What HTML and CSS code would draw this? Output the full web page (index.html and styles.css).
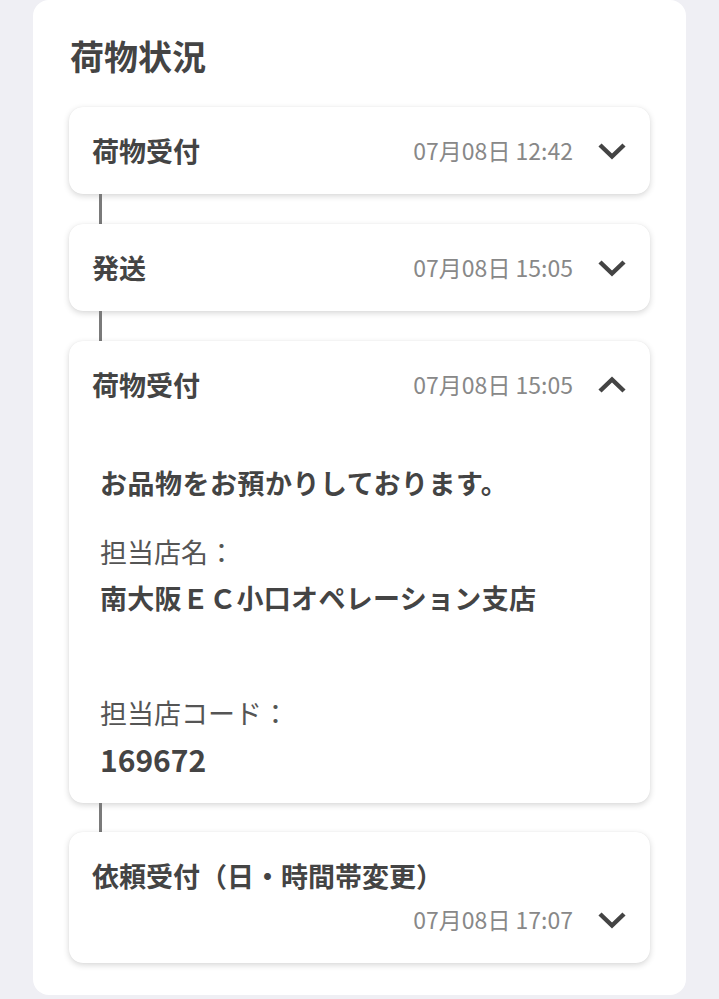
FILE: index.html
```html
<!DOCTYPE html>
<html lang="ja">
<head>
<meta charset="utf-8">
<title>荷物状況</title>
<link rel="stylesheet" href="styles.css">
</head>
<body>
<section class="panel">
  <h1 class="title">荷物状況</h1>
  <div class="timeline">
    <div class="card">
      <div class="head">
        <span class="name">荷物受付</span>
        <span class="meta"><span class="date">07月08日 12:42</span><svg class="chev" viewBox="0 0 30 18" width="30" height="18"><polyline points="3,3 15,14.5 27,3"/></svg></span>
      </div>
    </div>
    <div class="link"></div>
    <div class="card">
      <div class="head">
        <span class="name">発送</span>
        <span class="meta"><span class="date">07月08日 15:05</span><svg class="chev" viewBox="0 0 30 18" width="30" height="18"><polyline points="3,3 15,14.5 27,3"/></svg></span>
      </div>
    </div>
    <div class="link"></div>
    <div class="card">
      <div class="head">
        <span class="name">荷物受付</span>
        <span class="meta"><span class="date">07月08日 15:05</span><svg class="chev" viewBox="0 0 30 18" width="30" height="18"><polyline points="3,15 15,3.5 27,15"/></svg></span>
      </div>
      <div class="body">
        <p class="msg">お品物をお預かりしております。</p>
        <div class="field first">
          <div class="label">担当店名：</div>
          <div class="value">南大阪ＥＣ小口オペレーション支店</div>
        </div>
        <div class="field">
          <div class="label">担当店コード：</div>
          <div class="value num">169672</div>
        </div>
      </div>
    </div>
    <div class="link short"></div>
    <div class="card">
      <div class="head">
        <span class="name">依頼受付（日・時間帯変更）</span>
        <span class="meta"><span class="date">07月08日 17:07</span><svg class="chev" viewBox="0 0 30 18" width="30" height="18"><polyline points="3,3 15,14.5 27,3"/></svg></span>
      </div>
    </div>
  </div>
</section>
</body>
</html>
```
FILE: styles.css
```css
html, body {
  margin: 0;
  padding: 0;
  background: #efeff4;
}
body {
  font-family: "Noto Sans CJK JP", "Noto Sans", sans-serif;
  color: #444;
  width: 719px;
  min-height: 999px;
}
.panel {
  margin: 0 33px;
  width: 653px;
  box-sizing: border-box;
  background: #fff;
  border-radius: 16px;
  padding: 32px 36px 32px 36px;
}
.title {
  margin: 0 0 27px 1px;
  font-size: 34px;
  line-height: 48px;
  font-weight: 700;
  color: #444;
}
.timeline {
  display: flex;
  flex-direction: column;
}
.card {
  background: #fff;
  border-radius: 14px;
  box-shadow: 0 2px 6px rgba(0, 0, 0, 0.16), 0 0 1px rgba(0, 0, 0, 0.08);
}
.link {
  height: 30px;
  margin-left: 30px;
  width: 3px;
  background: #7a7a7a;
}
.link.short {
  height: 29px;
}
.head {
  display: flex;
  flex-wrap: wrap;
  justify-content: space-between;
  align-items: center;
  row-gap: 11px;
  padding: 27px 23px;
}
.name {
  font-size: 27px;
  line-height: 33px;
  font-weight: 700;
  color: #444;
}
.meta {
  display: flex;
  align-items: center;
  margin-left: auto;
  gap: 24px;
}
.date {
  font-size: 23px;
  line-height: 33px;
  color: #888;
  font-weight: 400;
}
.chev {
  display: block;
  fill: none;
  stroke: #444;
  stroke-width: 4.5;
  stroke-linecap: butt;
  stroke-linejoin: miter;
}
.body {
  padding: 32px 31px 21px 31px;
}
.msg {
  margin: 0 0 23px 0;
  font-size: 27px;
  line-height: 46px;
  font-weight: 700;
  letter-spacing: 0.5px;
}
.field.first {
  margin-bottom: 69px;
}
.label {
  font-size: 27px;
  line-height: 46px;
  font-weight: 400;
  color: #555;
}
.value {
  font-size: 27px;
  line-height: 46px;
  font-weight: 700;
  letter-spacing: 0.3px;
}
.value.num {
  font-size: 30px;
  letter-spacing: 0;
}
```
